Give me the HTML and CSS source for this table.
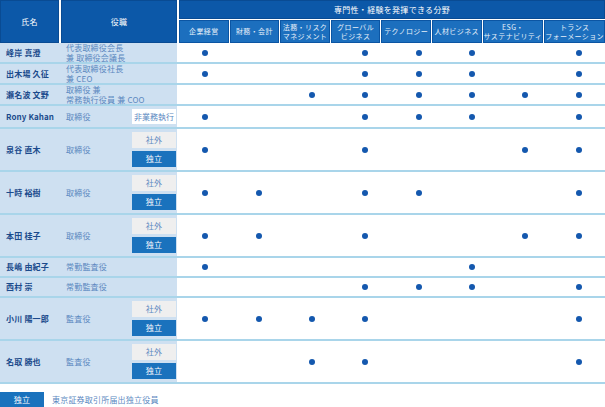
FILE: index.html
```html
<!DOCTYPE html>
<html lang="ja">
<head>
<meta charset="utf-8">
<title>取締役会スキルマトリックス</title>
<link rel="stylesheet" href="styles.css">
</head>
<body>
<div class="board">
  <div class="head">
    <div class="hcell h-name">氏名</div>
    <div class="hcell h-role">役職</div>
    <div class="h-skills">
      <div class="hcell h-title">専門性・経験を発揮できる分野</div>
      <div class="h-cols">
        <div class="hsub">企業経営</div>
        <div class="hsub">財務・会計</div>
        <div class="hsub">法務・リスク<br>マネジメント</div>
        <div class="hsub">グローバル<br>ビジネス</div>
        <div class="hsub">テクノロジー</div>
        <div class="hsub">人材ビジネス</div>
        <div class="hsub">ESG・<br>サステナビリティ</div>
        <div class="hsub">トランス<br>フォーメーション</div>
      </div>
    </div>
  </div>

  <div class="row">
    <div class="person"><span class="name">峰岸 真澄</span><span class="role">代表取締役会長<br>兼 取締役会議長</span></div>
    <div class="skills"><span class="c"><i class="dot"></i></span><span class="c"></span><span class="c"></span><span class="c"><i class="dot"></i></span><span class="c"><i class="dot"></i></span><span class="c"><i class="dot"></i></span><span class="c"></span><span class="c"><i class="dot"></i></span></div>
  </div>
  <div class="row">
    <div class="person"><span class="name">出木場 久征</span><span class="role">代表取締役社長<br>兼 CEO</span></div>
    <div class="skills"><span class="c"><i class="dot"></i></span><span class="c"></span><span class="c"></span><span class="c"><i class="dot"></i></span><span class="c"><i class="dot"></i></span><span class="c"><i class="dot"></i></span><span class="c"></span><span class="c"><i class="dot"></i></span></div>
  </div>
  <div class="row">
    <div class="person"><span class="name">瀬名波 文野</span><span class="role">取締役 兼<br>常務執行役員 兼 COO</span></div>
    <div class="skills"><span class="c"></span><span class="c"></span><span class="c"><i class="dot"></i></span><span class="c"><i class="dot"></i></span><span class="c"><i class="dot"></i></span><span class="c"><i class="dot"></i></span><span class="c"><i class="dot"></i></span><span class="c"><i class="dot"></i></span></div>
  </div>
  <div class="row">
    <div class="person"><span class="name name-latin">Rony Kahan</span><span class="role">取締役</span>
      <div class="badges one"><span class="badge nonexec">非業務執行</span></div></div>
    <div class="skills"><span class="c"><i class="dot"></i></span><span class="c"></span><span class="c"></span><span class="c"><i class="dot"></i></span><span class="c"><i class="dot"></i></span><span class="c"><i class="dot"></i></span><span class="c"></span><span class="c"><i class="dot"></i></span></div>
  </div>
  <div class="row">
    <div class="person"><span class="name">泉谷 直木</span><span class="role">取締役</span>
      <div class="badges"><span class="badge outside">社外</span><span class="badge ind">独立</span></div></div>
    <div class="skills"><span class="c"><i class="dot"></i></span><span class="c"></span><span class="c"></span><span class="c"><i class="dot"></i></span><span class="c"></span><span class="c"></span><span class="c"><i class="dot"></i></span><span class="c"><i class="dot"></i></span></div>
  </div>
  <div class="row">
    <div class="person"><span class="name">十時 裕樹</span><span class="role">取締役</span>
      <div class="badges"><span class="badge outside">社外</span><span class="badge ind">独立</span></div></div>
    <div class="skills"><span class="c"><i class="dot"></i></span><span class="c"><i class="dot"></i></span><span class="c"></span><span class="c"><i class="dot"></i></span><span class="c"><i class="dot"></i></span><span class="c"></span><span class="c"></span><span class="c"><i class="dot"></i></span></div>
  </div>
  <div class="row">
    <div class="person"><span class="name">本田 桂子</span><span class="role">取締役</span>
      <div class="badges"><span class="badge outside">社外</span><span class="badge ind">独立</span></div></div>
    <div class="skills"><span class="c"><i class="dot"></i></span><span class="c"><i class="dot"></i></span><span class="c"></span><span class="c"><i class="dot"></i></span><span class="c"></span><span class="c"></span><span class="c"><i class="dot"></i></span><span class="c"><i class="dot"></i></span></div>
  </div>
  <div class="row">
    <div class="person"><span class="name">長嶋 由紀子</span><span class="role">常勤監査役</span></div>
    <div class="skills"><span class="c"><i class="dot"></i></span><span class="c"></span><span class="c"></span><span class="c"></span><span class="c"></span><span class="c"><i class="dot"></i></span><span class="c"></span><span class="c"></span></div>
  </div>
  <div class="row">
    <div class="person"><span class="name">西村 崇</span><span class="role">常勤監査役</span></div>
    <div class="skills"><span class="c"></span><span class="c"></span><span class="c"></span><span class="c"><i class="dot"></i></span><span class="c"><i class="dot"></i></span><span class="c"><i class="dot"></i></span><span class="c"></span><span class="c"><i class="dot"></i></span></div>
  </div>
  <div class="row">
    <div class="person"><span class="name">小川 陽一郎</span><span class="role">監査役</span>
      <div class="badges"><span class="badge outside">社外</span><span class="badge ind">独立</span></div></div>
    <div class="skills"><span class="c"><i class="dot"></i></span><span class="c"><i class="dot"></i></span><span class="c"><i class="dot"></i></span><span class="c"><i class="dot"></i></span><span class="c"></span><span class="c"></span><span class="c"></span><span class="c"><i class="dot"></i></span></div>
  </div>
  <div class="row">
    <div class="person"><span class="name">名取 勝也</span><span class="role">監査役</span>
      <div class="badges"><span class="badge outside">社外</span><span class="badge ind">独立</span></div></div>
    <div class="skills"><span class="c"></span><span class="c"></span><span class="c"><i class="dot"></i></span><span class="c"><i class="dot"></i></span><span class="c"></span><span class="c"></span><span class="c"></span><span class="c"><i class="dot"></i></span></div>
  </div>

  <div class="legend">
    <span class="badge ind">独立</span>
    <span class="legend-text">東京証券取引所届出独立役員</span>
  </div>
</div>
</body>
</html>
```

FILE: styles.css
```css
* { box-sizing: border-box; }

html, body {
  margin: 0;
  padding: 0;
  background: #ffffff;
}

body {
  font-family: "Noto Sans CJK JP", "Noto Sans", sans-serif;
  font-size: 8px;
  width: 605px;
}

.board {
  width: 605px;
}

/* ---------- header ---------- */
.head {
  display: flex;
  gap: 2px;
  height: 43px;
}

.hcell {
  background: #0c58a8;
  border: 1px solid #094b93;
  color: #ffffff;
  display: flex;
  align-items: center;
  justify-content: center;
  font-size: 8px;
  letter-spacing: 0.3px;
}

.h-name { width: 59px; }
.h-role { width: 116px; }

.h-skills {
  width: 426px;
  display: flex;
  flex-direction: column;
  gap: 1px;
}

.h-title {
  height: 19px;
  flex: none;
}

.h-cols {
  flex: 1;
  display: grid;
  grid-template-columns: repeat(8, 1fr);
  gap: 1px;
}

.hsub {
  background: #1c6fbe;
  border: 1px solid #0b55a3;
  color: #e6f0fa;
  font-size: 7px;
  line-height: 9px;
  letter-spacing: 0.4px;
  text-align: center;
  display: flex;
  align-items: center;
  justify-content: center;
  white-space: nowrap;
}

/* ---------- body rows ---------- */
.row {
  display: flex;
  gap: 2px;
  border-bottom: 2px solid #a9d5ea;
}

.person {
  width: 177px;
  flex: none;
  background: #cee0f1;
  display: flex;
  align-items: center;
  padding: 0 1px 0 6px;
  min-height: 18px;
}

.name {
  width: 60px;
  flex: none;
  font-weight: 700;
  color: #1b4b8c;
  font-size: 8px;
  line-height: 10px;
  letter-spacing: 0.2px;
}

.name-latin {
  font-weight: 600;
  letter-spacing: 0.1px;
}

.role {
  flex: 1;
  color: #5b88bf;
  font-size: 8px;
  line-height: 9.5px;
  letter-spacing: 0.2px;
}

.badges {
  display: flex;
  flex-direction: column;
  gap: 3px;
  padding: 3px 0;
}

.badge {
  width: 44px;
  height: 16px;
  display: flex;
  align-items: center;
  justify-content: center;
  font-size: 8px;
  line-height: 10px;
  letter-spacing: 0.3px;
}

.badge.outside {
  background: #efefef;
  color: #5b88bf;
}

.badge.ind {
  background: #1a72bd;
  color: #ffffff;
}

.badge.nonexec {
  background: #ffffff;
  color: #5b88bf;
  height: 15px;
  letter-spacing: 0;
}

.skills {
  width: 426px;
  flex: none;
  display: grid;
  grid-template-columns: repeat(8, 1fr);
  gap: 1px;
  align-items: center;
}

.c {
  display: flex;
  justify-content: center;
  align-items: center;
}

.dot {
  display: block;
  width: 6px;
  height: 6px;
  border-radius: 50%;
  background: #1458ae;
}

/* ---------- legend ---------- */
.legend {
  display: flex;
  align-items: center;
  gap: 8px;
  margin-top: 8px;
}

.legend-text {
  color: #5b88bf;
  font-size: 8px;
  line-height: 10px;
  letter-spacing: 0.2px;
}
```
